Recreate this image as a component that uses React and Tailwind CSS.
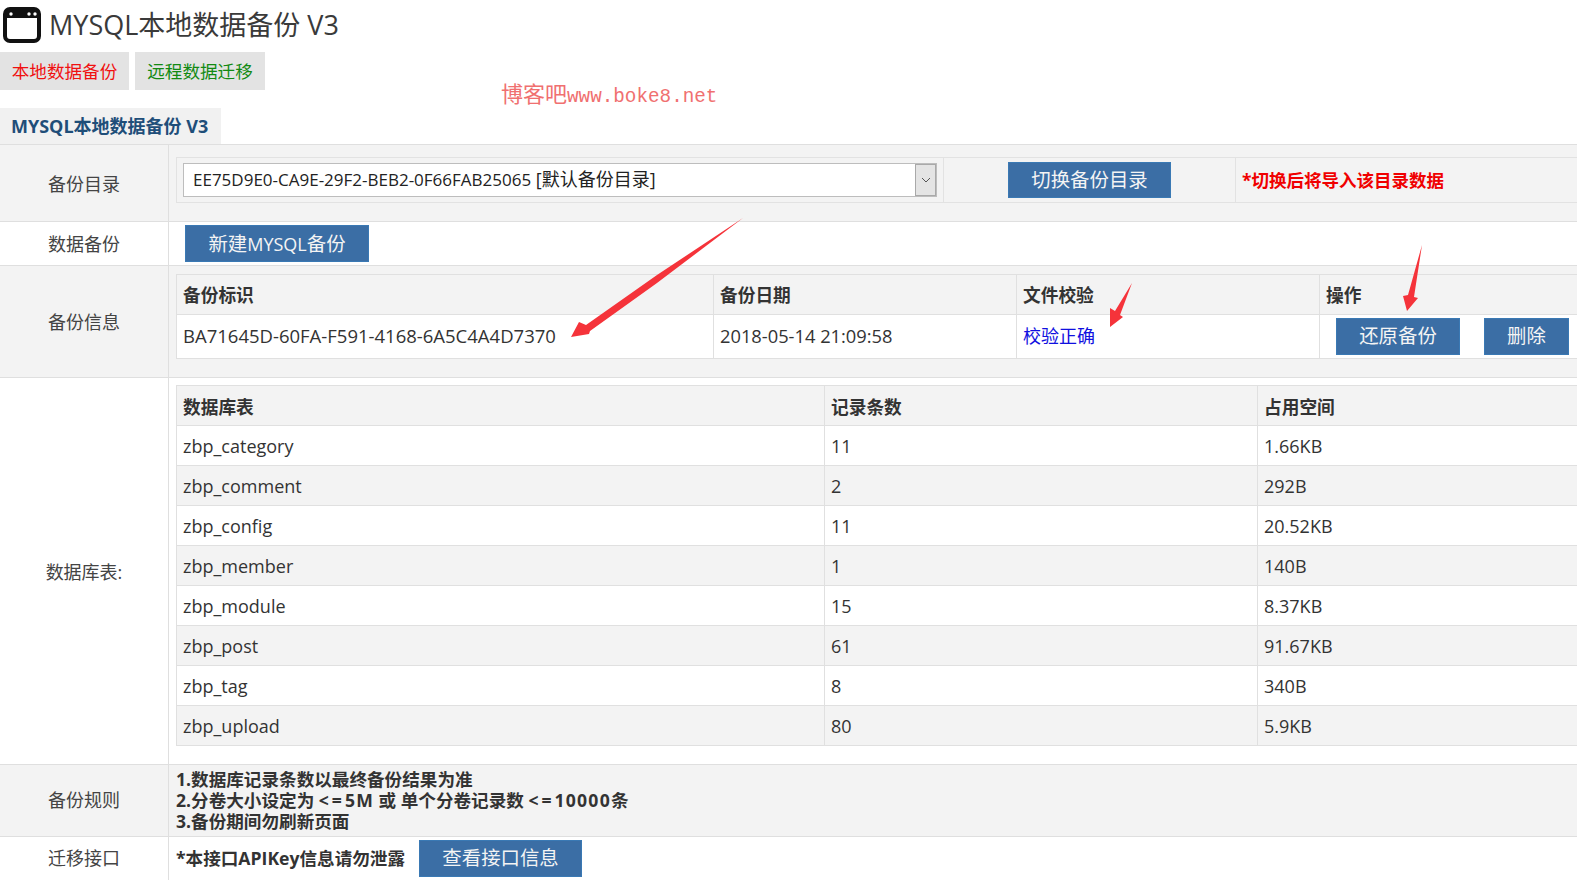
import React from 'react';

const backups = [
  ['zbp_category', '11', '1.66KB'],
  ['zbp_comment', '2', '292B'],
  ['zbp_config', '11', '20.52KB'],
  ['zbp_member', '1', '140B'],
  ['zbp_module', '15', '8.37KB'],
  ['zbp_post', '61', '91.67KB'],
  ['zbp_tag', '8', '340B'],
  ['zbp_upload', '80', '5.9KB'],
];

function Btn({ className, children }) {
  return (
    <button className={`bg-[#3b6ea5] border border-[#3a79b4] text-[#f4f4f4] text-[19.4px] leading-none flex items-center justify-center ${className}`}>
      {children}
    </button>
  );
}

function Label({ flush, children }) {
  return (
    <div className={`w-[169px] shrink-0 border-r border-[#dfdfdf] flex items-center justify-center text-[18px] text-[#444] ${flush ? '' : 'pt-[2px]'}`}>
      {children}
    </div>
  );
}

export default function App() {
  return (
    <div className="relative w-[1577px] h-[880px] overflow-hidden bg-white text-[#333] font-['Open_Sans','Noto_Sans_CJK_SC',sans-serif]">
      {/* Title */}
      <div className="h-[52px] flex items-center pl-[3px]">
        <svg width="38" height="36" viewBox="0 0 38 36" className="mt-[-2px]">
          <rect x="2" y="2" width="34" height="32" rx="5" fill="white" stroke="#111" strokeWidth="4" />
          <path d="M2 7a5 5 0 0 1 5-5h24a5 5 0 0 1 5 5v4H2z" fill="#111" />
          <circle cx="8" cy="7" r="1.7" fill="white" />
          <circle cx="26" cy="7" r="1.7" fill="white" />
          <circle cx="32" cy="7" r="1.7" fill="white" />
        </svg>
        <h1 className="ml-[8px] text-[27px] leading-none text-[#3a3a3a] font-normal mt-[-3px]">MYSQL本地数据备份 V3</h1>
      </div>

      {/* Tabs */}
      <div className="flex gap-[6px] h-[38px]">
        <div className="w-[129px] bg-[#e3e3e3] flex items-center justify-center text-[17.6px] text-[#f01010]">本地数据备份</div>
        <div className="w-[130px] bg-[#e3e3e3] flex items-center justify-center text-[17.6px] text-[#128a12]">远程数据迁移</div>
      </div>

      {/* Panel header */}
      <div className="mt-[18px] w-[221px] h-[36px] bg-[#f1f1f1] flex items-center pl-[11px] text-[18px] font-bold text-[#1f4e79] whitespace-nowrap">
        MYSQL本地数据备份 V3
      </div>

      {/* Backup dir */}
      <div className="flex h-[77px] bg-[#f3f3f3] border-t border-[#dfdfdf]">
        <Label>备份目录</Label>
        <div className="flex-1 pl-[7px] pt-[12px]">
          <div className="flex h-[46px] w-[1500px] border border-[#e2e2e2]">
            <div className="w-[767px] shrink-0 border-r border-[#e2e2e2] pl-[6px] pt-[5px]">
              <div className="w-[754px] h-[34px] bg-white border border-[#bdbdbd] flex items-center justify-between">
                <span className="pl-[9px] pb-[2px] text-[18px] text-[#222] whitespace-nowrap"><span className="text-[17px]">EE75D9E0-CA9E-29F2-BEB2-0F66FAB25065</span> [默认备份目录]</span>
                <span className="w-[21px] h-[32px] bg-[#e4e4e4] border border-[#a9a9a9] flex items-center justify-center">
                  <svg width="10" height="6" viewBox="0 0 10 6"><path d="M1 1l4 4 4-4" fill="none" stroke="#555" strokeWidth="1" /></svg>
                </span>
              </div>
            </div>
            <div className="w-[292px] shrink-0 border-r border-[#e2e2e2] flex items-center justify-center">
              <Btn className="w-[163px] h-[36px]">切换备份目录</Btn>
            </div>
            <div className="flex items-center pl-[6px] text-[17.5px] font-bold text-[#f00000]">*切换后将导入该目录数据</div>
          </div>
        </div>
      </div>

      {/* New backup */}
      <div className="flex h-[44px] bg-white border-t border-[#dfdfdf]">
        <Label>数据备份</Label>
        <div className="flex-1 pl-[16px] pt-[3px]">
          <Btn className="w-[184px] h-[37px]">新建<span className="text-[18px]">MYSQL</span>备份</Btn>
        </div>
      </div>

      {/* Backup info */}
      <div className="flex h-[112px] bg-[#f3f3f3] border-t border-[#dfdfdf]">
        <Label>备份信息</Label>
        <div className="flex-1 pl-[7px] pt-[8px]">
          <table className="w-[1500px] table-fixed border-collapse text-[18px]">
            <colgroup>
              <col className="w-[537px]" />
              <col className="w-[303px]" />
              <col className="w-[303px]" />
              <col />
            </colgroup>
            <thead>
              <tr className="h-[40px] bg-[#f3f3f3] font-bold">
                <th className="border border-[#e0e0e0] text-left pl-[6px] pt-[2px] font-bold text-[17.7px]">备份标识</th>
                <th className="border border-[#e0e0e0] text-left pl-[6px] pt-[2px] font-bold text-[17.7px]">备份日期</th>
                <th className="border border-[#e0e0e0] text-left pl-[6px] pt-[2px] font-bold text-[17.7px]">文件校验</th>
                <th className="border border-[#e0e0e0] text-left pl-[6px] pt-[2px] font-bold text-[17.7px]">操作</th>
              </tr>
            </thead>
            <tbody>
              <tr className="h-[44px] bg-white">
                <td className="border border-[#e0e0e0] pl-[6px] pb-[2px] text-[18.5px]">BA71645D-60FA-F591-4168-6A5C4A4D7370</td>
                <td className="border border-[#e0e0e0] pl-[6px] pb-[2px] text-[18.3px]">2018-05-14 21:09:58</td>
                <td className="border border-[#e0e0e0] pl-[6px]"><a className="text-[#1010e0]">校验正确</a></td>
                <td className="border border-[#e0e0e0] pl-[16px]">
                  <div className="flex gap-[24px]">
                    <Btn className="w-[124px] h-[37px] pb-[2px]">还原备份</Btn>
                    <Btn className="w-[85px] h-[37px] pb-[2px]">删除</Btn>
                  </div>
                </td>
              </tr>
            </tbody>
          </table>
        </div>
      </div>

      {/* Tables */}
      <div className="flex h-[387px] bg-white border-t border-[#dfdfdf]">
        <Label>数据库表:</Label>
        <div className="flex-1 pl-[7px] pt-[7px]">
          <table className="w-[1500px] table-fixed border-collapse text-[18px]">
            <colgroup>
              <col className="w-[648px]" />
              <col className="w-[433px]" />
              <col />
            </colgroup>
            <thead>
              <tr className="h-[40px] bg-[#f3f3f3]">
                <th className="border border-[#e0e0e0] text-left pl-[6px] pt-[3px] font-bold text-[17.7px]">数据库表</th>
                <th className="border border-[#e0e0e0] text-left pl-[6px] pt-[3px] font-bold text-[17.7px]">记录条数</th>
                <th className="border border-[#e0e0e0] text-left pl-[6px] pt-[3px] font-bold text-[17.7px]">占用空间</th>
              </tr>
            </thead>
            <tbody>
              {backups.map((row, i) => (
                <tr key={row[0]} className={`h-[40px] ${i % 2 === 0 ? 'bg-white' : 'bg-[#f3f3f3]'}`}>
                  {row.map((cell) => (
                    <td key={cell} className="border border-[#e0e0e0] pl-[6px] pt-[2px]">{cell}</td>
                  ))}
                </tr>
              ))}
            </tbody>
          </table>
        </div>
      </div>

      {/* Rules */}
      <div className="flex h-[72px] bg-[#f3f3f3] border-t border-[#dfdfdf]">
        <Label flush>备份规则</Label>
        <div className="pl-[7px] pt-[4px] text-[17.6px] leading-[21px] font-bold text-[#333] whitespace-nowrap">
          <p>1.数据库记录条数以最终备份结果为准</p>
          <p>2.分卷大小设定为 <span className="tracking-[3px]">&lt;=</span><span className="tracking-[1.2px]">5M</span> 或 单个分卷记录数 <span className="tracking-[3px]">&lt;=</span><span className="tracking-[1.2px]">10000</span>条</p>
          <p>3.备份期间勿刷新页面</p>
        </div>
      </div>

      {/* Api */}
      <div className="flex h-[44px] bg-white border-t border-[#dfdfdf]">
        <Label flush>迁移接口</Label>
        <div className="flex items-start pl-[7px] pt-[3px]">
          <span className="text-[17.6px] font-bold leading-[37px]">*本接口APIKey信息请勿泄露</span>
          <Btn className="ml-[14px] w-[163px] h-[37px] pb-[2px]">查看接口信息</Btn>
        </div>
      </div>

      {/* Watermark */}
      <div className="absolute left-[501px] top-[81px] text-[#f07070] text-[22px] leading-[32px] whitespace-nowrap font-['Liberation_Mono','Noto_Sans_CJK_SC',monospace]">
        博客吧<span className="text-[19.3px]">www.boke8.net</span>
      </div>

      {/* Arrows */}
      <svg width="1577" height="880" className="absolute left-0 top-0 pointer-events-none">
        <polygon points="571,337 579,322 586,325 657,275 743,218 657,283 590,331 589,334" fill="#f5333a" />
        <polygon points="1110,327 1110,308 1115,311 1132,283 1120,315 1123,317" fill="#f5333a" />
        <polygon points="1407,311 1403,296 1408,295 1422,245 1414,297 1418,298" fill="#f5333a" />
      </svg>
    </div>
  );
}
